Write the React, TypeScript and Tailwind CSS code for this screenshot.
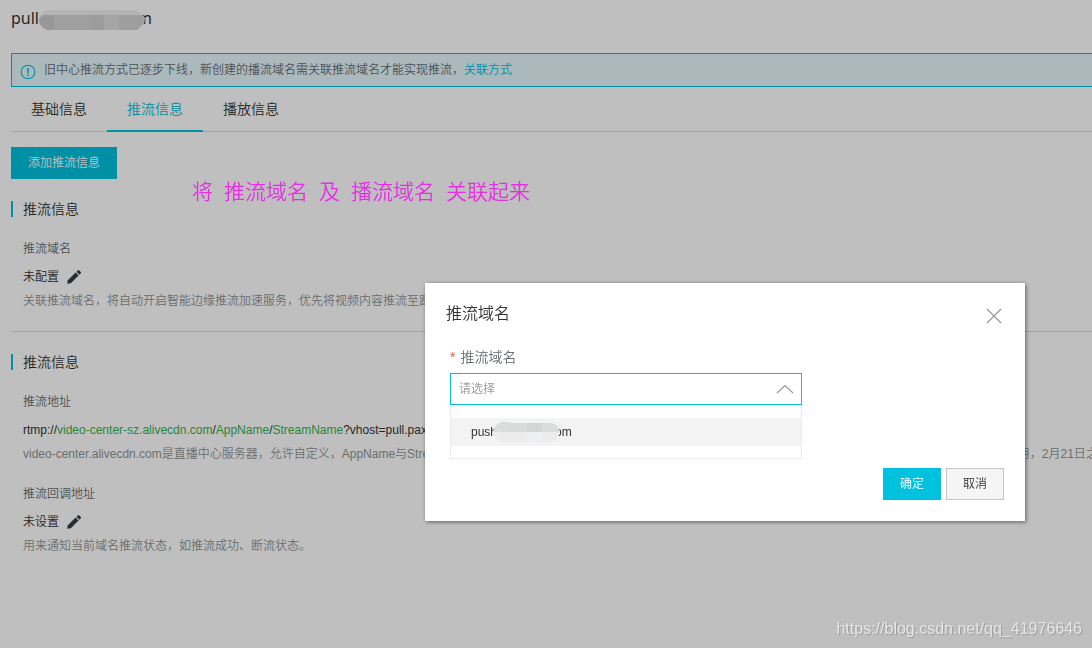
import React from 'react';

const tabs = ['基础信息', '推流信息', '播放信息'];

const note = ['将', '推流域名', '及', '播流域名', '关联起来'];

const PencilIcon = () => (
  <svg viewBox="0 0 16 16" className="h-4 w-4" fill="#373d41">
    <path d="M1.2 14.8 L1.8 11.2 L9.6 3.6 L12.6 6.6 L4.8 14.2 Z" />
    <path d="M10.4 2.8 L11.9 1.4 Q12.6 0.8 13.3 1.4 L14.8 2.9 Q15.4 3.6 14.8 4.3 L13.4 5.8 Z" />
  </svg>
);

const InfoIcon = () => (
  <svg viewBox="0 0 16 16" className="h-4 w-4 shrink-0" fill="none" stroke="#00c1de">
    <circle cx="8" cy="8" r="6.8" strokeWidth="1.1" />
    <path d="M8 4v5.4M8 10.6v1.6" strokeWidth="1.5" />
  </svg>
);

const SectionTitle = ({ children }: { children: React.ReactNode }) => (
  <div className="flex h-6 items-center">
    <h2 className="border-l-2 border-[#00c1de] pl-[10px] text-sm leading-4 text-[#333]">{children}</h2>
  </div>
);

type FieldProps = {
  label: string;
  value: React.ReactNode;
  hint: string;
  editable?: boolean;
};

const Field = ({ label, value, hint, editable }: FieldProps) => (
  <div className="pl-3 text-xs leading-5 whitespace-nowrap">
    <h3 className="text-[#686c6f]">{label}</h3>
    <div className="mt-[6px] flex h-6 items-center gap-[7px] text-[#333]">
      <span>{value}</span>
      {editable && (
        <button type="button" aria-label={`编辑${label}`}>
          <PencilIcon />
        </button>
      )}
    </div>
    <p className="mt-[2px] text-[#8f9294]">{hint}</p>
  </div>
);

const StreamUrl = () => (
  <>
    rtmp://<span className="text-[#35b34a]">video-center-sz.alivecdn.com</span>/
    <span className="text-[#35b34a]">AppName</span>/
    <span className="text-[#35b34a]">StreamName</span>?vhost=pull.pax
  </>
);

const DomainDialog = () => (
  <div
    role="dialog"
    aria-labelledby="dialog-title"
    className="w-[600px] bg-white px-[21px] pt-[19px] pb-[21px] shadow-[1px_1px_4px_rgba(0,0,0,0.5)]"
  >
    <div className="flex items-center justify-between">
      <h2 id="dialog-title" className="text-base leading-6 text-[#333]">推流域名</h2>
      <button type="button" aria-label="关闭" className="pt-1">
        <svg viewBox="0 0 20 20" className="h-5 w-5" fill="none" stroke="#999" strokeWidth="1.3">
          <path d="M3 3l14 14M17 3L3 17" />
        </svg>
      </button>
    </div>

    <form className="mt-[21px] w-[356px] pl-1">
      <label htmlFor="domain" className="flex items-center gap-[5px] text-sm leading-5 text-[#686c6f]">
        <span className="text-sm text-[#f15533]">*</span>推流域名
      </label>
      <div className="mt-[6px] grid items-center">
        <select
          id="domain"
          defaultValue=""
          className="col-start-1 row-start-1 h-8 w-full appearance-none border border-[#00c1de] bg-white px-2 text-xs text-[#999] outline-none"
        >
          <option value="">请选择</option>
        </select>
        <svg viewBox="0 0 18 10" className="pointer-events-none col-start-1 row-start-1 mr-2 h-[10px] w-[18px] justify-self-end" fill="none" stroke="#999" strokeWidth="1.2">
          <path d="M1 9l8-7.500 8 7.500" />
        </svg>
      </div>
      <ul className="border border-t-0 border-[#ebecec] py-[13px] pb-3">
        <li className="flex h-7 items-center bg-[#f3f3f3] pl-5 text-xs text-[#333]">
          <span>push</span>
          <svg viewBox="0 0 68 22" className="relative -mr-1.5 -ml-1 h-[22px] w-[68px]">
            <path d="M0 11C1 5 5 2 9 1h6l2 1h41c5 1 8 4 9 9z" fill="#dbdcdc" />
            <path d="M15 2h19v9H15z" fill="#d9dada" />
            <path d="M34 2h15v9H34z" fill="#d4d5d5" />
            <path d="M0 11h67c-1 6-5 9-10 10H14C6 21 1 17 0 11z" fill="#ececec" />
            <path d="M34 11h15v10H34z" fill="#edf0f0" />
          </svg>
          <span>om</span>
        </li>
      </ul>
    </form>

    <div className="mt-[9px] flex justify-end gap-[5px] text-xs">
      <button type="button" className="h-8 w-[58px] bg-[#00c1de] text-white">确定</button>
      <button type="button" className="h-8 w-[58px] border border-[#c4c6c8] bg-[#f5f5f6] text-[#333]">取消</button>
    </div>
  </div>
);

const App = () => {
  return (
    <div
      lang="zh-CN"
      className="min-h-screen overflow-hidden bg-white font-['Liberation_Sans','Noto_Sans_CJK_SC',sans-serif] font-[350]"
    >
      <main className="pl-[11px]">
        <h1 className="flex h-[52px] items-start pt-[6px] font-['Noto_Sans','Noto_Sans_CJK_SC',sans-serif] text-base leading-6 font-normal text-[#333]">
          <span>pull</span>
          <svg viewBox="0 0 106 20" className="relative -mr-2 mt-1 h-5 w-[106px]">
            <path d="M8 0h88l6 3 4 5-1 6-7 6H8C3 18 0 14 0 10S3 2 8 0z" fill="#f0f0f0" />
            <path d="M0 10Q1 7 4 5h11v15H8C3 18 0 14 0 10z" fill="#cbcbcb" />
            <path d="M15 5h36v15H15z" fill="#d4d4d4" />
            <path d="M51 5h14v15H51z" fill="#d0d0d0" />
            <path d="M65 5h15v15H65z" fill="#dcdddd" />
            <path d="M80 5h24l1 8-7 7H80z" fill="#d3d3d3" />
          </svg>
          <span>m</span>
        </h1>

        <div className="mt-px flex h-[34px] items-center gap-2 border border-r-0 border-[#00c1de] bg-[#e5f7fd] pl-2 text-xs text-[#686c6f]">
          <span className="pt-1"><InfoIcon /></span>
          <p className="whitespace-nowrap">
            旧中心推流方式已逐步下线，新创建的播流域名需关联推流域名才能实现推流，
            <a href="#link" className="text-[#00c1de]">关联方式</a>
          </p>
        </div>

        <nav className="flex h-[45px] border-b border-[#d7d8d9] text-sm">
          {tabs.map((tab, i) => (
            <button
              key={tab}
              type="button"
              className={
                i === 1
                  ? 'h-[45px] w-24 border-b-2 border-[#00c1de] text-[#00c1de]'
                  : 'h-[45px] w-24 border-b-2 border-transparent text-[#333]'
              }
            >
              {tab}
            </button>
          ))}
        </nav>

        <button type="button" className="mt-[15px] block h-8 w-[106px] bg-[#00c1de] text-xs text-white">
          添加推流信息
        </button>

        <section className="mt-[18px] border-b border-[#d7d8d9] pb-5">
          <SectionTitle>推流信息</SectionTitle>
          <div className="mt-[18px]">
            <Field
              label="推流域名"
              value="未配置"
              hint="关联推流域名，将自动开启智能边缘推流加速服务，优先将视频内容推流至距离"
              editable
            />
          </div>
        </section>

        <section className="mt-[18px]">
          <SectionTitle>推流信息</SectionTitle>
          <div className="mt-[18px] flex flex-col gap-5">
            <Field
              label="推流地址"
              value={<StreamUrl />}
              hint="video-center.alivecdn.com是直播中心服务器，允许自定义，AppName与StreamName均可自定义，支持中英文以外的字符时请先编码，旧的中心直播推流地址目前暂时仍然可以继续正常使用，2月21日之后将停止服务。"
            />
            <Field
              label="推流回调地址"
              value="未设置"
              hint="用来通知当前域名推流状态，如推流成功、断流状态。"
              editable
            />
          </div>
        </section>
      </main>

      <div className="fixed inset-0 flex items-start justify-end bg-black/25 pt-[283px] pr-[67px]">
        <DomainDialog />
      </div>

      <p className="absolute top-[176px] left-48 flex gap-[11px] text-[21px] leading-8 text-[#e62ee6]">
        {note.map((word) => (
          <span key={word}>{word}</span>
        ))}
      </p>

      <p className="fixed right-[10px] bottom-[7px] text-base text-[#e6e6e6] [text-shadow:1px_1px_1px_#999]">
        https://blog.csdn.net/qq_41976646
      </p>
    </div>
  );
};

export default App;
